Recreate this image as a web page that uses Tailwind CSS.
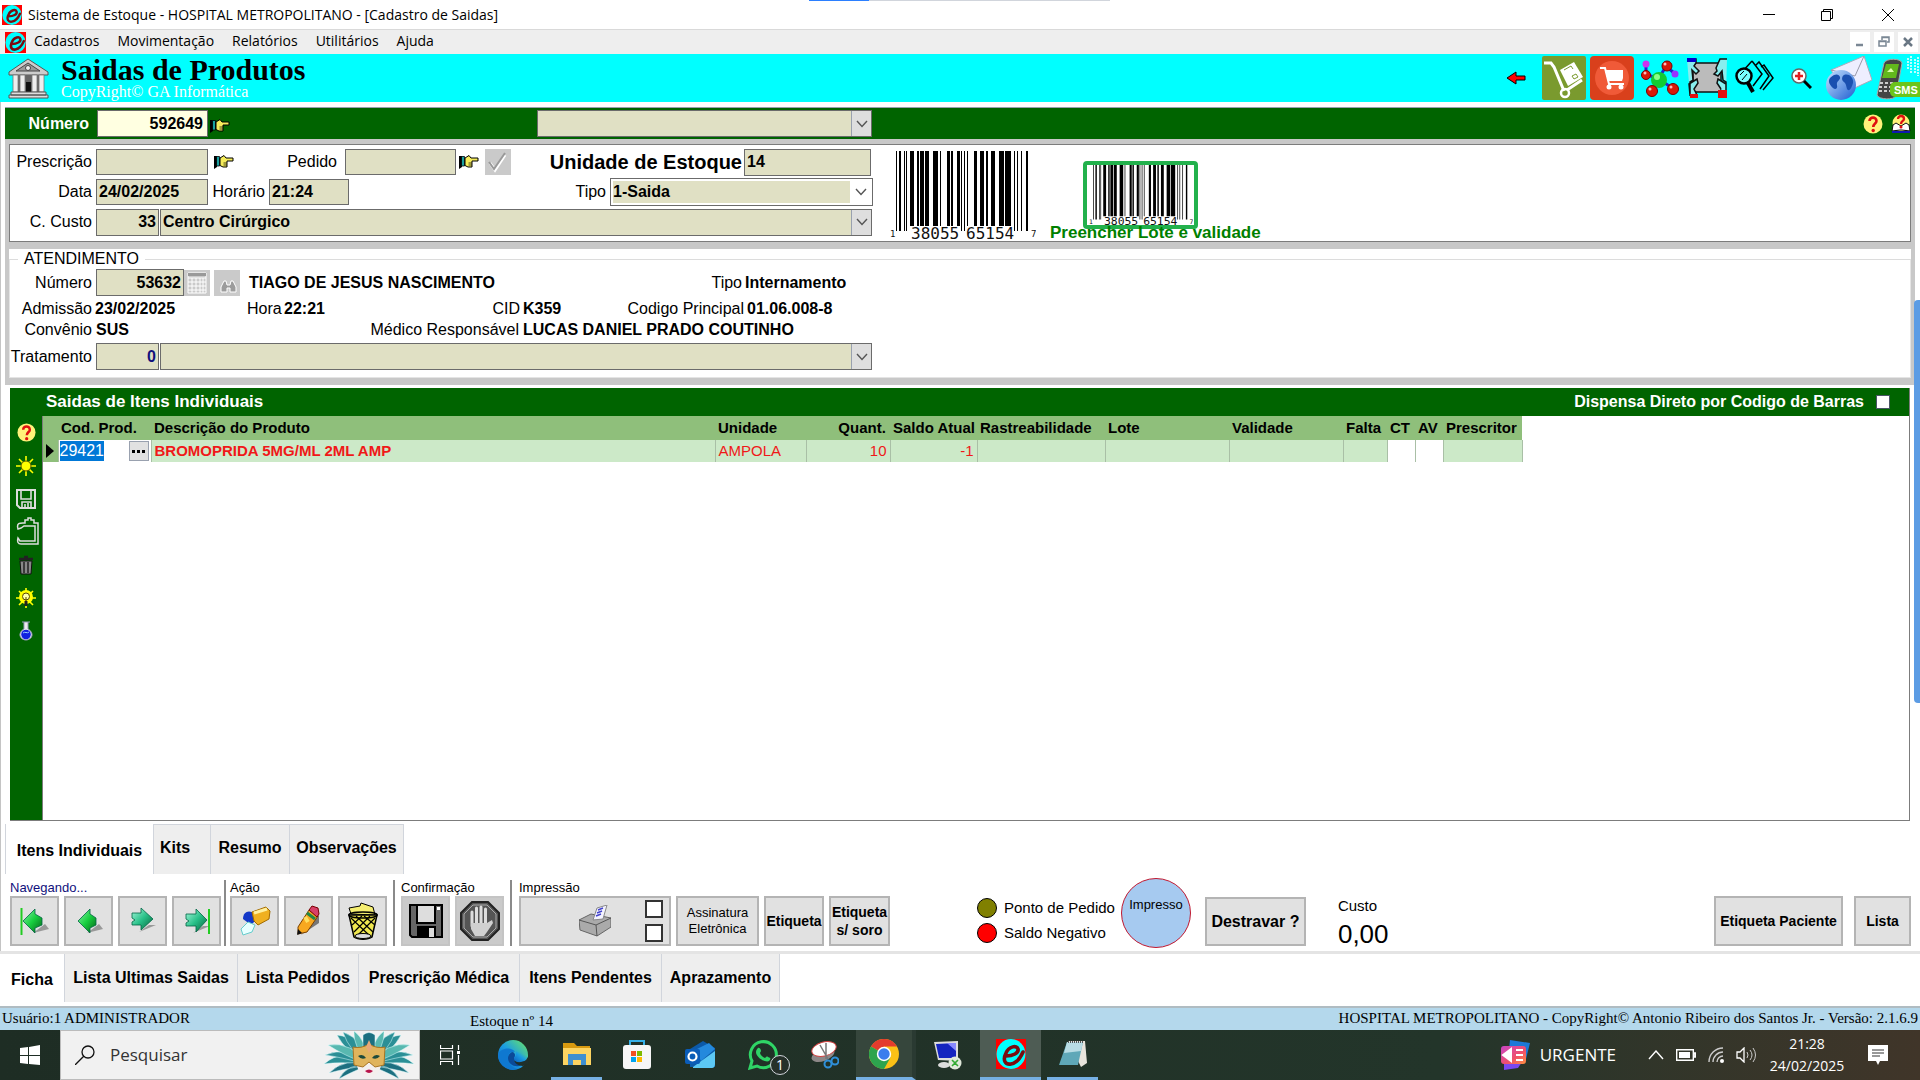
<!DOCTYPE html>
<html lang="pt-BR">
<head>
<meta charset="utf-8">
<title>Sistema de Estoque</title>
<script src="https://cdn.jsdelivr.net/npm/@tailwindcss/browser@4"></script>
</head>
<body class="flex min-h-screen flex-col bg-white font-['Liberation_Sans',Arial,sans-serif] text-base leading-5 text-black">

<!-- shared symbols -->
<svg class="absolute size-0" aria-hidden="true">
  <linearGradient id="gEdge" x1="0" y1="1" x2="1" y2="0"><stop offset="0" stop-color="#0b5fc0"/><stop offset=".5" stop-color="#1b9de2"/><stop offset="1" stop-color="#6fe860"/></linearGradient>
  <linearGradient id="gGreen" x1="0" y1="0" x2="1" y2="1"><stop offset="0" stop-color="#8ff0b0"/><stop offset=".5" stop-color="#18d040"/><stop offset="1" stop-color="#066018"/></linearGradient>
  <linearGradient id="gTeal" x1="0" y1="0" x2="1" y2="1"><stop offset="0" stop-color="#a8f8dc"/><stop offset=".5" stop-color="#28c088"/><stop offset="1" stop-color="#046038"/></linearGradient>
  <linearGradient id="gGlobe" x1="0" y1="0" x2="1" y2="1"><stop offset="0" stop-color="#c8e4ff"/><stop offset="1" stop-color="#1c5cd0"/></linearGradient>
  <linearGradient id="gNews" x1="0" y1="0" x2="1" y2="1"><stop offset="0" stop-color="#c846c8"/><stop offset=".6" stop-color="#f0506a"/><stop offset="1" stop-color="#ff9040"/></linearGradient>
  <symbol id="logo" viewBox="0 0 30 30"><path fill="#f00" d="M0 0h30v30H0z"/><ellipse cx="15" cy="15" rx="14.5" ry="15" fill="#0ff"/><path d="M10 17c7 0 13-3 12-7-1-4-9-3-12 4-4 8 0 12 5 11 5-1 9-5 12-12" fill="none" stroke="#7a0c10" stroke-width="3.6" stroke-linecap="round"/></symbol>
  <symbol id="hand" viewBox="0 0 20 14"><path fill="#000" d="M0 1h3v11l-3 2z"/><path fill="#1aa0a0" stroke="#000" stroke-width=".8" d="M2.500 1.500h3v9.500h-3z"/><path d="M6 3l4-2.500 2 2.500h7v3h-6v6h-4l-3-1.500z" fill="#f5ec5a" stroke="#000"/><path d="M9.500 8h3.500M9.500 10h3.500" stroke="#000" stroke-width=".7"/></symbol>
  <symbol id="help" viewBox="0 0 20 20"><circle cx="10" cy="10" r="9.500" fill="#fff27a"/><path d="M6.500 7c0-4.500 7-4.500 7 0 0 2.500-3.200 2.600-3.200 6" fill="none" stroke="#e01010" stroke-width="2.600"/><circle cx="10.200" cy="16.500" r="1.700" fill="#e01010"/></symbol>
  <symbol id="chev" viewBox="0 0 12 8"><path d="M1 1l5 5.500L11 1" fill="none" stroke="#555" stroke-width="1.400"/></symbol>
  <symbol id="barcode" viewBox="0 0 146 88" preserveAspectRatio="none"><path d="M6 0h1v80h-1zM9 0h2v80h-2zM14 0h1v80h-1zM16 0h1v80h-1zM20 0h4v75h-4zM27 0h2v75h-2zM30 0h4v75h-4zM35 0h4v75h-4zM43 0h5v75h-5zM50 0h1v75h-1zM57 0h3v75h-3zM61 0h2v75h-2zM67 0h3v75h-3zM71 0h1v80h-1zM74 0h1v80h-1zM77 0h1v75h-1zM84 0h3v75h-3zM90 0h4v75h-4zM96 0h2v75h-2zM101 0h4v75h-4zM109 0h5v75h-5zM115 0h3v75h-3zM118 0h3v75h-3zM124 0h1v80h-1zM127 0h1v80h-1zM131 0h1v80h-1zM136 0h2v80h-2z"/><g font-family="DejaVu Sans Mono, monospace" font-size="16" fill="#111"><text x="21" y="88">38055</text><text x="76" y="88">65154</text><g font-size="9"><text x="0" y="86">1</text><text x="141" y="86">7</text></g></g></symbol>
</svg>

<!-- window title -->
<header class="relative flex h-[29px] items-center bg-white pl-0.5 font-['Open_Sans','Noto_Sans',sans-serif] text-sm">
  <div class="absolute top-0 left-[809px] flex h-px w-[301px] bg-gray-300"><span class="w-[60px] bg-blue-500"></span></div>
  <svg class="mr-1.5 size-5"><use href="#logo"/></svg>
  <h1>Sistema de Estoque - HOSPITAL METROPOLITANO - [Cadastro de Saidas]</h1>
  <div class="ml-auto flex">
    <button aria-label="Minimizar" class="flex h-7 w-[58px] items-center justify-center"><svg class="h-3 w-3" viewBox="0 0 12 12"><path d="M0 5.500h12" stroke="#000"/></svg></button>
    <button aria-label="Restaurar" class="flex h-7 w-[58px] items-center justify-center"><svg class="h-3 w-3" viewBox="0 0 12 12"><path d="M.5 2.500h9v9h-9zM2.500 2.500v-2h9v9h-2" fill="none" stroke="#000"/></svg></button>
    <button aria-label="Fechar" class="flex h-7 w-16 items-center justify-center"><svg class="h-3 w-3" viewBox="0 0 12 12"><path d="M0 0l12 12M12 0L0 12" stroke="#000"/></svg></button>
  </div>
</header>

<nav class="flex h-[25px] items-center border-t border-[#d9d9d9] bg-[#eeeeee] pl-[5px] font-['Open_Sans','Noto_Sans',sans-serif] text-sm">
  <svg class="mr-2 size-[21px]"><use href="#logo"/></svg>
  <div class="flex gap-[18px] pb-0.5"><a href="#">Cadastros</a><a href="#">Movimentação</a><a href="#">Relatórios</a><a href="#">Utilitários</a><a href="#">Ajuda</a></div>
  <div class="ml-auto flex gap-1 pr-0.5">
    <button aria-label="Minimizar janela" class="flex h-5 w-5 items-center justify-center bg-white"><svg class="size-3" viewBox="0 0 12 12"><path d="M2 9h7" stroke="#7a8794" stroke-width="2.500"/></svg></button>
    <button aria-label="Restaurar janela" class="flex h-5 w-5 items-center justify-center bg-white"><svg class="size-3" viewBox="0 0 12 12"><path d="M1 5h7v5H1zM4 4V1h7v5H9M1 5.500h7M4 1.500h7" fill="none" stroke="#7a8794" stroke-width="1.500"/></svg></button>
    <button aria-label="Fechar janela" class="flex h-5 w-5 items-center justify-center bg-white"><svg class="size-3" viewBox="0 0 12 12"><path d="M2 2l8 8M10 2l-8 8" stroke="#6a7784" stroke-width="2.500"/></svg></button>
  </div>
</nav>

<!-- cyan banner -->
<section class="flex h-12 items-center bg-[#00ffff] pl-2">
  <svg class="size-[42px]" viewBox="0 0 42 42"><path d="M1 15L20 2l20 13v3H1z" fill="#ccc" stroke="#555"/><path d="M8 14l12-8 12 8z" fill="#999" stroke="#444"/><circle cx="20" cy="11" r="2.500" fill="#eee" stroke="#444"/><path d="M5 18h31v17H5z" fill="#666"/><path d="M5 18h5v17H5zM12 18h5v17h-5zM24 18h5v17h-5zM31 18h5v17h-5z" fill="#eee" stroke="#777" stroke-width=".8"/><path d="M18 25h5v10h-5z" fill="#111"/><path d="M3 35h35v3H3zM1 38h39v3H1z" fill="#ddd" stroke="#555"/></svg>
  <div class="ml-[11px] font-['Liberation_Serif',serif]">
    <h2 class="text-[30px] leading-7 font-bold">Saidas de Produtos</h2>
    <p class="text-base leading-4 text-white">CopyRight© GA Informática</p>
  </div>
  <div class="ml-auto flex gap-1">
    <button aria-label="Voltar" class="flex h-11 w-11 items-center justify-center"><svg class="h-4 w-5" viewBox="0 0 20 16"><path d="M1 8l9-6v4h9v4h-9v4z" fill="#f00" stroke="#000"/></svg></button>
    <button aria-label="Entregas" class="h-11 w-11"><svg viewBox="0 0 44 44"><rect width="44" height="44" rx="2" fill="#7a9a2e"/><path d="M2 7h7l3 4 10 24M25 34l15-10" fill="none" stroke="#fff" stroke-width="3"/><circle cx="23" cy="37" r="4" fill="none" stroke="#fff" stroke-width="2.500"/><path d="M18 14l14-8 9 15-15 9z" fill="#fff"/><path d="M22 14l7-4 2 3M32 23l4-2-2-3-4 2z" stroke="#7a9a2e" fill="none"/></svg></button>
    <button aria-label="Compras" class="h-11 w-11"><svg viewBox="0 0 44 44"><rect width="44" height="44" rx="4" fill="#d9401c"/><circle cx="22" cy="22" r="17" fill="#f05a38"/><path d="M10 12h5l4 16h15" fill="none" stroke="#fff" stroke-width="2"/><path d="M15 14h18v8l-1 3H18z" fill="#fff"/><circle cx="19" cy="31" r="2.500" fill="#fff"/><circle cx="31" cy="31" r="2.500" fill="#fff"/></svg></button>
    <button aria-label="Composição" class="h-11 w-11"><svg viewBox="0 0 44 44"><path d="M8 9l0 9 14 6M36 17l-8-7-8 14M14 35l8-11 14 9" stroke="#22c" stroke-width="3" fill="none"/><circle cx="21" cy="24" r="8" fill="#1c3"/><circle cx="19" cy="21" r="3" fill="#8f8"/><g fill="#d81808" stroke="#700"><circle cx="8" cy="19" r="4.500"/><circle cx="29" cy="10" r="5"/><circle cx="14" cy="35" r="5.500"/><circle cx="35" cy="33" r="5.500"/></g><circle cx="8" cy="8" r="3.500" fill="#c3e"/><circle cx="37" cy="18" r="3.500" fill="#93f"/><g fill="#fbb"><circle cx="27" cy="8" r="1.500"/><circle cx="12" cy="33" r="1.500"/><circle cx="33" cy="31" r="1.500"/><circle cx="7" cy="17" r="1.500"/></g></svg></button>
    <button aria-label="Equipe" class="h-11 w-11"><svg viewBox="0 0 44 44"><path d="M7 7h28v29H7z" fill="#bbb" stroke="#111" stroke-width="1.500"/><path d="M1 3h9v4l-2 3 5 5-3 3-4-4 1 10-3 2v14M41 3h-7l-4 9 1 3-3 3 4 2 4-5 1 9 3 2v12M4 39l-1-11 8-5 1 4-4 6 3 6M40 39V28l-8-5-1 4 4 6" fill="#8ee" stroke="#111" stroke-width="1.500"/><path fill="#00c" d="M1 2h9v4H1z"/><path fill="#e01010" d="M4 38h8v4H4zM32 34h9v8h-9z"/></svg></button>
    <button aria-label="Consultar documentos" class="h-11 w-11"><svg viewBox="0 0 44 44"><path d="M18 5l10 13-9 12M22 9l3-3 10 14-9 13M27 11l3-2 9 13-10 12M18 5L8 16" fill="none" stroke="#000" stroke-width="1.500"/><circle cx="10" cy="20" r="7.500" fill="#7ff" stroke="#000" stroke-width="2.500"/><path d="M6 19l4-4M8 24l5-6" stroke="#000"/><path d="M14 27l5 9" stroke="#000" stroke-width="4"/></svg></button>
    <button aria-label="Ampliar" class="flex h-11 w-[38px] items-center justify-center"><svg class="size-[21px]" viewBox="0 0 21 21"><circle cx="8" cy="8" r="7" fill="#fff" stroke="#666" stroke-width="1.500"/><path d="M8 4v8M4 8h8" stroke="#e02020" stroke-width="2.500"/><path d="M13 13l7 7" stroke="#000" stroke-width="3"/></svg></button>
    <button aria-label="E-mail" class="h-11 w-12"><svg viewBox="0 0 48 44"><path d="M7 14L40 0l8 24-26 12z" fill="#eef" stroke="#aab"/><path d="M7 14l24 6L40 0" fill="none" stroke="#99a"/><circle cx="17" cy="29" r="15" fill="url(#gGlobe)"/><path d="M6 22c5-5 9-4 10-1s-4 4-3 8-2 5-4 3-6-6-3-10zM20 19c6-2 10 4 9 8s-3 8-5 7-1-6-4-8-2-6 0-7z" fill="#1a50b0"/></svg></button>
    <button aria-label="SMS" class="h-11 w-11"><svg viewBox="0 0 44 44"><path d="M32 2v12M35 0v18M39 3v14M42 1v19" stroke="#bff" stroke-width="2" stroke-dasharray="2 1"/><path d="M8 7c2-5 17-5 18 0l-6 33c-2 4-17 4-19-1z" fill="#444" stroke="#aaa"/><path d="M10 8h13l-3 14H6z" fill="#62b81c"/><path d="M11 16l4-4 3 4z" fill="#dfa"/><path d="M4 27h14M3 31h14M3 35h13" stroke="#ccc" stroke-width="2" stroke-dasharray="3 2"/><rect x="14" y="26" width="34" height="15" rx="5" fill="#6cc41c"/><text x="18" y="38" font-family="Liberation Sans" font-weight="bold" font-size="11" fill="#fff">SMS</text></svg></button>
  </div>
</section>

<main class="flex flex-1 flex-col border-l border-[#c4c4c4] pt-[5px] pr-[5px] pl-1">
  <!-- number bar -->
  <div class="flex h-8 items-center border-t border-gray-400 bg-[#006400]">
    <label for="numero" class="w-[84px] text-right font-bold text-white">Número</label>
    <input id="numero" value="592649" class="ml-2 h-[27px] w-[111px] border border-[#6b6b6b] bg-[#ffffe1] px-1 text-right font-bold">
    <button aria-label="Ir para número" class="ml-0.5 pt-1"><svg class="h-3.5 w-5"><use href="#hand"/></svg></button>
    <div class="relative ml-[307px]">
      <select aria-label="Registro" class="block h-[27px] w-[335px] appearance-none border border-[#6b6b6b] bg-[#e0e0c4]"><option></option></select>
      <span class="pointer-events-none absolute inset-y-px right-px flex w-5 items-center justify-center border-l border-gray-400 bg-[#dedede]"><svg class="h-2 w-3"><use href="#chev"/></svg></span>
    </div>
    <div class="ml-auto flex gap-2 pr-1">
      <button aria-label="Ajuda"><svg class="size-5"><use href="#help"/></svg></button>
      <button aria-label="Manual"><svg class="size-5" viewBox="0 0 20 20"><circle cx="10" cy="9" r="8.500" fill="#fff27a"/><path d="M2 11l3-2 5 3 5-3 3 2 1 6-8-1h-2l-8 1z" fill="#fff" stroke="#111"/><path d="M1 18h18" stroke="#1018b0" stroke-width="2"/><path d="M7 5c0-4 6-4 6 0 0 2-3 2-3 5" fill="none" stroke="#e01010" stroke-width="2.300"/><circle cx="10" cy="13" r="1.500" fill="#e01010"/></svg></button>
    </div>
  </div>

  <div class="bg-[#c8c8c8] px-1 pt-[5px] pb-[7px]">
    <!-- exit header -->
    <section class="flex h-[98px] border border-[#7c7c7c] bg-white pt-1">
      <div class="flex w-[864px] flex-col gap-1">
        <div class="flex h-[26px] items-center">
          <label for="presc" class="w-[82px] text-right">Prescrição</label>
          <input id="presc" class="ml-1 h-[26px] w-28 border border-[#6b6b6b] bg-[#e0e0c4]">
          <button aria-label="Ir para prescrição" class="ml-1.5"><svg class="h-3.5 w-5"><use href="#hand"/></svg></button>
          <label for="pedido" class="w-[103px] text-right">Pedido</label>
          <input id="pedido" class="ml-2 h-[26px] w-[111px] border border-[#6b6b6b] bg-[#e0e0c4]">
          <button aria-label="Ir para pedido" class="ml-[3px]"><svg class="h-3.5 w-5"><use href="#hand"/></svg></button>
          <button aria-label="Confirmar pedido" class="ml-1.5 size-[26px] bg-[#cacaca]"><svg viewBox="0 0 26 26"><path d="M5 14l5 7L20 6" fill="none" stroke="#fff" stroke-width="3"/><path d="M4 13l5 7L20 4" fill="none" stroke="#999" stroke-width="2"/></svg></button>
          <label for="unid" class="w-[231px] text-right text-xl font-bold">Unidade de Estoque</label>
          <input id="unid" value="14" class="ml-0.5 h-[27px] w-[127px] border border-[#6b6b6b] bg-[#e0e0c4] px-0.5 font-bold">
        </div>
        <div class="flex h-[26px] items-center">
          <label for="data" class="w-[82px] text-right">Data</label>
          <input id="data" value="24/02/2025" class="ml-1 h-[26px] w-28 border border-[#6b6b6b] bg-[#e0e0c4] px-0.5 font-bold">
          <label for="hora" class="w-[57px] text-right">Horário</label>
          <input id="hora" value="21:24" class="ml-1 h-[26px] w-20 border border-[#6b6b6b] bg-[#e0e0c4] px-0.5 font-bold">
          <label for="tipo" class="w-[257px] text-right">Tipo</label>
          <div class="relative ml-1">
            <select id="tipo" class="block h-7 w-[263px] appearance-none border border-[#6b6b6b] bg-[#e0e0c4] px-0.5 font-bold ring-2 ring-white ring-inset"><option>1-Saida</option></select>
            <span class="pointer-events-none absolute inset-y-px right-px flex w-[22px] items-center justify-center bg-white"><svg class="h-2 w-3"><use href="#chev"/></svg></span>
          </div>
        </div>
        <div class="flex h-[26px] items-center">
          <label for="cc" class="w-[82px] text-right">C. Custo</label>
          <input id="cc" value="33" class="ml-1 h-[27px] w-[63px] border border-[#6b6b6b] bg-[#e0e0c4] px-0.5 text-right font-bold">
          <div class="relative ml-px">
            <select aria-label="Centro de custo" class="block h-[27px] w-[712px] appearance-none border border-[#6b6b6b] bg-[#e0e0c4] px-0.5 font-bold"><option>Centro Cirúrgico</option></select>
            <span class="pointer-events-none absolute inset-y-px right-px flex w-5 items-center justify-center border-l border-gray-400 bg-[#dedede]"><svg class="h-2 w-3"><use href="#chev"/></svg></span>
          </div>
        </div>
      </div>
      <svg class="mt-0.5 ml-4 h-[88px] w-[146px]"><use href="#barcode"/></svg>
      <div class="ml-[14px] flex flex-col items-start pt-3">
        <button aria-label="Ler código de barras" class="ml-[33px] h-[68px] w-[115px] rounded-sm border-4 border-[#22b14c] bg-white"><svg class="mx-auto h-[60px] w-[104px]"><use href="#barcode"/></svg></button>
        <p class="-mt-1 text-[17px] leading-4 font-bold text-[#008000]">Preencher Lote e validade</p>
      </div>
    </section>

    <!-- attendance -->
    <div class="mt-[7px] bg-white">
    <fieldset class="h-[129px] border border-t-[#dcdcdc] border-[#e4e4e4]">
      <legend class="ml-2 px-1.5 font-medium">ATENDIMENTO</legend>
      <div class="flex h-[27px] items-center">
        <label for="atend" class="w-[82px] text-right">Número</label>
        <input id="atend" value="53632" class="ml-1 h-[27px] w-[88px] border border-[#6b6b6b] bg-[#e0e0c4] px-0.5 text-right font-bold">
        <button aria-label="Calendário" class="size-[26px] bg-[#cacaca]"><svg viewBox="0 0 26 26"><path d="M4 3h18v20H4zM4 8h18M4 12h18M4 16h18M4 20h18M8 8v15M12 8v15M16 8v15M19 8v15" fill="none" stroke="#fff"/><path d="M4 3h18v3H4z" fill="#999"/></svg></button>
        <button aria-label="Procurar atendimento" class="ml-1 size-[26px] bg-[#cacaca]"><svg viewBox="0 0 26 26"><path d="M7 22v-5l3-6h2l1 4h3l1-4h2l3 6v5h-6v-4h-3v4z" fill="#9c9c9c" stroke="#fff"/></svg></button>
        <b class="w-[466px] pl-[9px]">TIAGO DE JESUS NASCIMENTO</b>
        <span class="w-9 text-right">Tipo</span><b class="ml-[3px]">Internamento</b>
      </div>
      <div class="flex h-[25px] items-center">
        <span class="w-[82px] text-right">Admissão</span><b class="ml-[3px] w-[152px]">23/02/2025</b>
        <span class="w-[34px]">Hora</span><b class="ml-[3px] w-[190px]">22:21</b>
        <span class="w-[46px] text-right">CID</span><b class="ml-[3px] w-[100px]">K359</b>
        <span class="w-[121px] text-right">Codigo Principal</span><b class="ml-[3px]">01.06.008-8</b>
      </div>
      <div class="flex h-[18px] items-center">
        <span class="w-[82px] text-right">Convênio</span><b class="ml-1 w-[260px]">SUS</b>
        <span class="w-[163px] text-right">Médico Responsável</span><b class="ml-1">LUCAS DANIEL PRADO COUTINHO</b>
      </div>
      <div class="mt-1 flex h-[27px] items-center">
        <label for="trat" class="w-[82px] text-right">Tratamento</label>
        <input id="trat" value="0" class="ml-1 h-[27px] w-[63px] border border-[#6b6b6b] bg-[#e0e0c4] px-0.5 text-right font-bold text-[#10107c]">
        <div class="relative ml-px">
          <select aria-label="Tratamento" class="block h-[27px] w-[712px] appearance-none border border-[#6b6b6b] bg-[#e0e0c4]"><option></option></select>
          <span class="pointer-events-none absolute inset-y-px right-px flex w-5 items-center justify-center border-l border-gray-400 bg-[#dedede]"><svg class="h-2 w-3"><use href="#chev"/></svg></span>
        </div>
      </div>
    </fieldset>
    </div>
  </div>

  <!-- items -->
  <section class="mx-[5px] mt-[3px] flex flex-1 flex-col border-r border-b border-[#7c7c7c]">
    <div class="flex h-7 items-center justify-between bg-[#006400] pr-[19px] pl-9 font-bold text-white">
      <h3 class="text-[17px]">Saidas de Itens Individuais</h3>
      <label class="flex items-center gap-3">Dispensa Direto por Codigo de Barras <input type="checkbox" class="size-3.5 appearance-none border border-gray-600 bg-white"></label>
    </div>
    <div class="flex flex-1">
      <div class="flex w-[33px] flex-col border-r border-[#7c7c7c] bg-[#006400]">
        <button aria-label="Ajuda dos itens" class="flex h-[33px] items-center justify-center"><svg class="size-[19px]"><use href="#help"/></svg></button>
        <button aria-label="Novo item" class="flex h-[33px] items-center justify-center"><svg class="size-5" viewBox="0 0 20 20"><path d="M10 0v20M0 10h20M3 3l14 14M17 3L3 17" stroke="#ff0" stroke-width="1.600"/><circle cx="10" cy="10" r="5" fill="#ff0" stroke="#550"/></svg></button>
        <button aria-label="Gravar item" class="flex h-[33px] items-center justify-center"><svg class="size-5" viewBox="0 0 20 20"><path d="M1 1h18v18H4l-3-3z" fill="none" stroke="#ddd" stroke-width="2"/><path d="M5 1v9h10V1M6 19v-6h9v6M9 15v4M12 14v4" fill="none" stroke="#ddd" stroke-width="1.600"/></svg></button>
        <button aria-label="Colar item" class="flex h-[33px] items-center justify-center pl-1"><svg class="h-[29px] w-6" viewBox="0 0 24 29"><path d="M2 12c-2-7 3-6 7-6V3h3V1h3v2h3v3h4v21H5c-3 0-4-2-3-6l2 3h15V9H8l-3 2z" fill="none" stroke="#ddd" stroke-width="1.500"/></svg></button>
        <button aria-label="Excluir item" class="flex h-[33px] items-center justify-center"><svg class="size-5" viewBox="0 0 20 20"><path d="M4 6h12l-1 13H5z" fill="#888" stroke="#111"/><path d="M3 4h14M8 2h4" stroke="#222" stroke-width="2.500"/><path d="M8 7v11M12 7v11" stroke="#222" stroke-width="1.500"/></svg></button>
        <button aria-label="Sugestão" class="flex h-[33px] items-center justify-center"><svg class="size-5" viewBox="0 0 20 20"><path d="M10 0v20M0 10h20M3 3l14 14M17 3L3 17" stroke="#ff0" stroke-width="1.600"/><circle cx="10" cy="9" r="7" fill="#ff0"/><circle cx="10" cy="8.500" r="3.500" fill="#ffa" stroke="#540"/><path d="M10 9v4" stroke="#540"/><path d="M8.500 13h3v5h-3z" fill="#222"/></svg></button>
        <button aria-label="Componentes" class="flex h-[33px] items-center justify-center"><svg class="size-5" viewBox="0 0 20 20"><path d="M6 1h8M8 1v7c-7 4-4 11 2 11s9-7 2-11V1" fill="#eee" stroke="#99b"/><circle cx="10" cy="13.500" r="4.800" fill="#1020e0"/><path d="M7 12c2-2 4 1 6-1" stroke="#9cf" fill="none"/></svg></button>
      </div>
      <div class="flex-1 bg-white">
        <table class="w-[1479px] table-fixed border-collapse text-[15px]">
          <colgroup><col class="w-[15px]"><col class="w-[93px]"><col class="w-[564px]"><col class="w-[91px]"><col class="w-[84px]"><col class="w-[87px]"><col class="w-32"><col class="w-[124px]"><col class="w-[114px]"><col class="w-11"><col class="w-7"><col class="w-7"><col class="w-[79px]"></colgroup>
          <thead><tr class="h-6 bg-[#8fbf7b] text-left whitespace-nowrap [&>th]:p-0 [&>th]:pl-[3px]">
            <th></th><th>Cod. Prod.</th><th>Descrição do Produto</th><th>Unidade</th><th class="text-right">Quant.&nbsp;</th><th>Saldo Atual</th><th>Rastreabilidade</th><th>Lote</th><th>Validade</th><th>Falta</th><th>CT</th><th>AV</th><th>Prescritor</th>
          </tr></thead>
          <tbody><tr class="h-[22px] bg-[#cce9c8] text-[#f01818] [&>td]:border-r [&>td]:border-[#a9bfa6] [&>td]:p-0 [&>td]:px-[3px]">
            <td class="bg-[#8fbf7b]"><svg class="h-3.5 w-2" viewBox="0 0 8 14"><path d="M0 0l8 7-8 7z"/></svg></td>
            <td class="bg-white"><div class="flex items-center justify-between"><span class="-ml-0.5 bg-[#0078d7] text-base leading-5 text-white">29421</span><button aria-label="Procurar produto" class="-mr-px flex h-5 w-5 items-center justify-center gap-0.5 border border-gray-400 bg-[#e1e1e1]"><i class="size-[3px] bg-black"></i><i class="size-[3px] bg-black"></i><i class="size-[3px] bg-black"></i></button></div></td>
            <td class="font-bold">BROMOPRIDA 5MG/ML 2ML AMP</td><td>AMPOLA</td><td class="text-right">10</td><td class="text-right">-1</td><td></td><td></td><td></td><td></td><td class="bg-white"></td><td class="bg-white"></td><td></td>
          </tr></tbody>
        </table>
      </div>
    </div>
  </section>

  <div class="mt-[3px] flex h-[50px] font-bold">
    <button class="w-[148px] border-l border-gray-300 pt-1 text-center">Itens Individuais</button>
    <button class="w-[57px] border-t border-l border-gray-300 bg-[#eeeeee] pb-1 pl-1.5 text-left">Kits</button>
    <button class="w-[79px] border-t border-l border-gray-300 bg-[#eeeeee] pb-1">Resumo</button>
    <button class="w-[115px] border-x border-t border-gray-300 bg-[#eeeeee] pb-1">Observações</button>
  </div>

  <!-- action bar -->
  <div class="mt-1.5 flex h-[71px] items-start text-[13px] leading-4">
    <div class="pl-[5px]"><p class="text-[#10107c]">Navegando...</p>
      <div class="flex gap-[5px]">
        <button aria-label="Primeiro" class="flex h-[50px] w-[49px] items-center justify-center border-2 border-[#b4b4b4] bg-[#e1e1e1]"><svg class="size-8" viewBox="0 0 32 32"><path d="M14 28l16-4-4-5z" fill="#999"/><path d="M4 16L16 4v5l7 4v7l-7 3v5z" fill="url(#gGreen)" stroke="#064" stroke-width=".8"/><path d="M2.500 3v27" stroke="#2c2" stroke-width="2"/></svg></button>
        <button aria-label="Anterior" class="flex h-[50px] w-[49px] items-center justify-center border-2 border-[#b4b4b4] bg-[#e1e1e1]"><svg class="size-8" viewBox="0 0 32 32"><path d="M14 28l16-4-4-5z" fill="#999"/><path d="M5 16L17 4v5l6 4v7l-6 3v5z" fill="url(#gGreen)" stroke="#064" stroke-width=".8"/></svg></button>
        <button aria-label="Próximo" class="flex h-[50px] w-[49px] items-center justify-center border-2 border-[#b4b4b4] bg-[#e1e1e1]"><svg class="size-8" viewBox="0 0 32 32"><path d="M12 27l17-7h-7z" fill="#999"/><path d="M26 14L14 3v5H5v5l3 2-3 2v3h9v5z" fill="url(#gTeal)" stroke="#064" stroke-width=".8"/></svg></button>
        <button aria-label="Último" class="flex h-[50px] w-[49px] items-center justify-center border-2 border-[#b4b4b4] bg-[#e1e1e1]"><svg class="size-8" viewBox="0 0 32 32"><path d="M12 28l17-7h-7z" fill="#999"/><path d="M26 15L15 4v5H5v5l3 2-3 2v3h10v6z" fill="url(#gTeal)" stroke="#064" stroke-width=".8"/><path d="M28 4v25" stroke="#2c2" stroke-width="2"/></svg></button>
      </div>
    </div>
    <div class="ml-[3px] border-l-2 border-[#8a8a8a] pl-1"><p>Ação</p>
      <div class="flex gap-[5px]">
        <button aria-label="Incluir" class="flex h-[50px] w-[49px] items-center justify-center border-2 border-[#b4b4b4] bg-[#e1e1e1]"><svg class="size-8" viewBox="0 0 32 32"><path d="M4 14c0-6 4-9 9-7l3 9-4 4z" fill="#1438c8"/><path d="M13 7l14-5 4 4-1 8-11 6-4-4z" fill="#f0b020" stroke="#a06a00"/><path d="M15 8l13-4" stroke="#fff0a0" stroke-width="3"/><path d="M2 24l7-7 7 3-3 7-9 3z" fill="#e8ffff" stroke="#6cc"/></svg></button>
        <button aria-label="Alterar" class="flex h-[50px] w-[49px] items-center justify-center border-2 border-[#b4b4b4] bg-[#e1e1e1]"><svg class="size-8" viewBox="0 0 32 32"><path d="M8 30l18-12V10z" fill="#777"/><path d="M5 22L16 5l9 6-11 16-9 2z" fill="#f8a820" stroke="#7a4000"/><path d="M12 12l3 5" stroke="#ffe060" stroke-width="4"/><path d="M16 5l3-4 6 2 1 6-2 3z" fill="#d84068" stroke="#700"/><path d="M14 8l8 6" stroke="#284" stroke-width="3"/><path d="M5 24l4 4-5 2z" fill="#111"/></svg></button>
        <button aria-label="Excluir" class="flex h-[50px] w-[49px] items-center justify-center border-2 border-[#b4b4b4] bg-[#e1e1e1]"><svg class="h-[38px] w-8" viewBox="0 0 32 38"><path d="M4 12L2 6l11-2 1-3 12 4 2 8z" fill="#f5ee70" stroke="#000"/><path d="M2 13h28l-5 22c-4 3-14 3-18 0z" fill="#f0e850" stroke="#000" stroke-width="1.500"/><path d="M4 16l20 19M9 14l17 16M17 14l11 9M28 16L9 35M23 14L7 30M15 14L5 23" stroke="#000" stroke-width="1.200"/><ellipse cx="16" cy="13" rx="14" ry="3" fill="none" stroke="#000" stroke-width="1.500"/><ellipse cx="16" cy="34" rx="8" ry="2.500" fill="#ddd" stroke="#000"/></svg></button>
      </div>
    </div>
    <div class="ml-1.5 border-l-2 border-[#8a8a8a] pl-1.5"><p>Confirmação</p>
      <div class="flex gap-[5px]">
        <button aria-label="Gravar" class="flex h-[50px] w-[49px] items-center justify-center border-2 border-[#c4c4c4] bg-[#cacaca]"><svg class="size-[34px]" viewBox="0 0 34 34"><path d="M1 1h32v32H3l-2-2z" fill="#666" stroke="#000" stroke-width="2"/><path d="M8 1h18v18H8z" fill="#ddd" stroke="#000" stroke-width="2"/><path d="M8 22h19v11H8z" fill="#000"/><path d="M20 24h5v9h-5z" fill="#ddd"/><path d="M28 3h3v3h-3z" fill="#fff"/></svg></button>
        <button aria-label="Cancelar" class="flex h-[50px] w-[49px] items-center justify-center border-2 border-[#c4c4c4] bg-[#cacaca]"><svg class="size-10 shrink-0" viewBox="0 0 40 40"><path d="M12 1h16l11 11v16L28 39H12L1 28V12z" fill="#555" stroke="#222" stroke-width="2"/><path d="M13 4h14l9 9v14l-9 9H13l-9-9V13z" fill="none" stroke="#aaa"/><path d="M12 11v14M16.500 7v16M21 6v16M25.500 8v16" stroke="#ddd" stroke-width="3" stroke-linecap="round"/><path d="M11 22h16l5-3 1 3-6 9-3 4H15l-4-7z" fill="#d0d0d0"/></svg></button>
      </div>
    </div>
    <div class="ml-1.5 border-l-2 border-[#8a8a8a] pl-[7px]"><p>Impressão</p>
      <div class="flex gap-[5px]">
        <div class="relative">
          <button aria-label="Imprimir" class="flex h-[50px] w-[152px] items-center justify-center border-2 border-[#b4b4b4] bg-[#e1e1e1]"><svg class="size-8" viewBox="0 0 32 32"><path d="M0 15l12-6 20 4v9L18 31 1 25z" fill="#aaa" stroke="#666"/><path d="M0 15l17 5 15-7M17 20l1 11" stroke="#555" fill="none"/><path d="M14 15l4-12 10-3-4 14z" fill="#f4f4ff" stroke="#888"/><path d="M19 5l5-2M18 8l5-2M17 11l5-2" stroke="#44c" stroke-width="1.500"/></svg></button>
          <input type="checkbox" aria-label="Imprimir cópia 1" class="absolute top-1 right-2 size-[18px] appearance-none border-2 border-[#333] bg-white">
          <input type="checkbox" aria-label="Imprimir cópia 2" class="absolute right-2 bottom-1 size-[18px] appearance-none border-2 border-[#333] bg-white">
        </div>
        <button class="h-[50px] w-[83px] border-2 border-[#b4b4b4] bg-[#e1e1e1] text-center">Assinatura<br>Eletrônica</button>
        <button class="h-[50px] w-[60px] border-2 border-[#b4b4b4] bg-[#e1e1e1] text-sm font-bold">Etiqueta</button>
        <button class="h-[50px] w-[61px] border-2 border-[#b4b4b4] bg-[#e1e1e1] text-center text-sm leading-[18px] font-bold">Etiqueta<br>s/ soro</button>
      </div>
    </div>
    <ul class="mt-[18px] ml-[87px] flex flex-col gap-[5px] text-[15px] leading-5">
      <li class="flex items-center gap-[7px]"><i class="size-5 rounded-full border border-black bg-[#808000]"></i>Ponto de Pedido</li>
      <li class="flex items-center gap-[7px]"><i class="size-5 rounded-full border border-black bg-[#ff0000]"></i>Saldo Negativo</li>
    </ul>
    <div class="-mt-0.5 ml-1.5 h-[70px] w-[70px] rounded-full border border-[#c01830] bg-[#a6caf0] pt-[18px] text-center">Impresso</div>
    <button class="mt-[17px] ml-3.5 h-[49px] w-[101px] border-2 border-[#b4b4b4] bg-[#e1e1e1] text-base font-bold">Destravar ?</button>
    <div class="mt-4 ml-8 text-[15px] leading-5">Custo<div class="mt-1 text-[26px] leading-7">0,00</div></div>
    <div class="mt-4 ml-auto flex gap-[11px] text-sm font-bold">
      <button class="h-[50px] w-[129px] border-2 border-[#b4b4b4] bg-[#e1e1e1]">Etiqueta Paciente</button>
      <button class="mr-1 h-[50px] w-[57px] border-2 border-[#b4b4b4] bg-[#e1e1e1]">Lista</button>
    </div>
  </div>
</main>

<!-- page tabs -->
<div class="flex h-[55px] border-t-3 border-[#e4e4e4] pb-1 font-bold">
  <button class="w-16 pt-1">Ficha</button>
  <button class="w-[173px] border-l border-gray-300 bg-[#eeeeee]">Lista Ultimas Saidas</button>
  <button class="w-[121px] border-l border-gray-300 bg-[#eeeeee]">Lista Pedidos</button>
  <button class="w-[161px] border-l border-gray-300 bg-[#eeeeee]">Prescrição Médica</button>
  <button class="w-[142px] border-l border-gray-300 bg-[#eeeeee]">Itens Pendentes</button>
  <button class="w-[119px] border-x border-gray-300 bg-[#eeeeee]">Aprazamento</button>
</div>

<footer class="flex h-6 border-t-2 border-[#b0bcc2] bg-[#b4d8ec] px-0.5 font-['Liberation_Serif',serif] text-[15px] leading-5">
  <span class="w-[468px]">Usuário:1 ADMINISTRADOR</span><span class="pt-[3px]">Estoque nº 14</span>
  <span class="ml-auto">HOSPITAL METROPOLITANO - CopyRight© Antonio Ribeiro dos Santos Jr. - Versão: 2.1.6.9</span>
</footer>

<!-- taskbar -->
<div class="flex h-[50px] items-stretch bg-linear-to-r from-[#1e2d24] via-[#23352a] via-75% to-[#403529] font-['Open_Sans','Noto_Sans',sans-serif] text-white">
  <button aria-label="Iniciar" class="flex w-[60px] items-center justify-center"><svg class="size-5" viewBox="0 0 20 20"><path d="M0 3l8-1v8H0zM9 2l11-2v10H9zM0 11h8v8l-8-1zM9 11h11v9L9 19z" fill="#fff"/></svg></button>
  <label class="flex w-[360px] items-center border border-[#bbb] bg-[#f1f1f1] pl-3.5">
    <svg class="size-5" viewBox="0 0 20 20"><circle cx="13" cy="7" r="6" fill="none" stroke="#111" stroke-width="1.300"/><path d="M9 11l-9 9" stroke="#111" stroke-width="1.300"/></svg>
    <input aria-label="Pesquisar" placeholder="Pesquisar" class="ml-[15px] w-[213px] text-[17px] text-black placeholder-[#333]">
    <svg class="h-12 w-[92px]" viewBox="0 0 92 48"><g stroke="#dff" stroke-width=".5"><g fill="#2b8f96"><path d="M46 34Q22 20 14 4 36 6 46 34zM46 34Q70 20 78 4 56 6 46 34zM46 34Q20 30 1 33 20 16 46 34zM46 34Q72 30 91 33 72 16 46 34z"/><path d="M46 34Q26 20 20 1 40 8 46 34zM46 34Q66 20 72 1 52 8 46 34zM46 34Q18 26 2 24 24 14 46 34zM46 34Q74 26 90 24 68 14 46 34z"/></g><g fill="#58b8b0"><path d="M46 34Q30 16 31 0 44 10 46 34zM46 34Q62 16 61 0 48 10 46 34zM46 34Q20 24 5 14 28 10 46 34zM46 34Q72 24 87 14 64 10 46 34z"/></g><g fill="#1c6f80"><path d="M46 34Q20 38 6 42 22 26 46 34zM46 34Q72 38 86 42 70 26 46 34zM46 34Q26 42 16 48 24 32 46 34zM46 34Q66 42 76 48 68 32 46 34zM40 20V4q6-5 12 0v16z"/></g></g><path d="M33 28c0-10 26-10 26 0 0 10-6 19-13 19s-13-9-13-19z" fill="#f4f0ee"/><path d="M30 16q8 2 16-3 8 5 16 3l-1 18-9 2-6-5-6 5-9-2z" fill="#e0b45c" stroke="#a87422"/><path d="M35 25q5-3 8 2-5 2-8-2zM57 25q-5-3-8 2 5 2 8-2z" fill="#1d4a3c"/><path d="M46 9l3 7-3 6-3-6z" fill="#e8a878"/><path d="M42 40q4-3 8 0-4 4-8 0z" fill="#b8144a"/></svg>
  </label>
  <button aria-label="Visão de tarefas" class="flex w-[60px] items-center justify-center"><svg class="size-5" viewBox="0 0 20 20"><path d="M.5 0v3.500h12V0M.5 20v-3.500h12V20M.5 6h12v8H.5zM18.500 0v5M18.500 10v10" fill="none" stroke="#fff" stroke-width="1.200"/><path d="M17 6h3v3h-3z" fill="#fff"/></svg></button>
  <button aria-label="Edge" class="flex w-[66px] items-center justify-center"><svg class="size-[30px]" viewBox="0 0 30 30"><circle cx="15" cy="15" r="15" fill="url(#gEdge)"/><path d="M0 15C1 8 14 6 17 12c-5-1-7 3-7 6 0 5 4 10 10 11C9 32 0 24 0 15z" fill="#0f78d0"/><path d="M10 18c0 6 6 9 11 8 3-1 6-3 7-6-4 3-12 3-12-1 0-2 1-2 1-4 0-1-1-3-3-3-2 1-4 3-4 6z" fill="#0b4a98"/><path d="M18 14c0 3-2 3-2 5 0 4 8 4 12 1 2-2 2-4 2-5l-12-4z" fill="url(#gEdge)"/><path d="M16 19c0 4 8 4 12 1l2-3v7l-5 2c-5 0-9-3-9-7z" fill="#20302a"/></svg></button>
  <button aria-label="Explorador" class="mr-1 ml-[5px] flex w-[51px] items-center justify-center border-b-3 border-[#76b0e4]"><svg class="h-6 w-7" viewBox="0 0 28 24"><path d="M0 1h11l3 3h13v5H0z" fill="#d89a10"/><path d="M0 6h28v17H0z" fill="#fcd462"/><path d="M5 23V12h18v11h-5v-5h-8v5z" fill="#3f8fd0"/></svg></button>
  <button aria-label="Loja" class="flex w-[62px] items-center justify-center"><svg class="h-[30px] w-[30px]" viewBox="0 0 30 30"><path d="M8 6V1h14v5" fill="none" stroke="#36b0e8" stroke-width="2"/><rect y="5" x="1" width="28" height="24" rx="3" fill="#f6f6f6"/><path fill="#f25022" d="M9 11h5v5H9z"/><path fill="#7fba00" d="M15 11h5v5h-5z"/><path fill="#00a4ef" d="M9 17h5v5H9z"/><path fill="#ffb900" d="M15 17h5v5h-5z"/></svg></button>
  <button aria-label="Outlook" class="flex w-16 items-center justify-center"><svg class="size-[30px]" viewBox="0 0 30 30"><path d="M5 9l13-8 12 7v19H5z" fill="#0c59a8"/><path d="M10 10L24 3l6 6-14 12z" fill="#2489dd"/><path d="M8 27l22-16v13c0 2-1 4-3 4H8z" fill="#5cc8f4"/><rect y="9" width="15" height="15" rx="2" fill="#0a5cb8"/><circle cx="7.500" cy="16.500" r="4" fill="none" stroke="#fff" stroke-width="2.200"/></svg></button>
  <button aria-label="WhatsApp" class="relative flex w-[62px] items-center justify-center"><svg class="size-[30px]" viewBox="0 0 30 30"><path d="M2 28l2-7A13 13 0 1 1 9 26z" fill="none" stroke="#2fd566" stroke-width="3"/><path d="M10 8c2-1 3 2 3 3s-1 1-1 2c1 3 3 4 5 5 1-1 2-2 3-1 3 1 3 2 1 4-3 2-13-3-13-9 0-2 1-3 2-4z" fill="#2fd566"/></svg><span class="absolute top-[25px] right-[4px] flex size-5 items-center justify-center rounded-full border border-gray-300 bg-[#26302a] text-sm">1</span></button>
  <button aria-label="Ferramenta de captura" class="flex w-[62px] items-center justify-center"><svg class="size-7" viewBox="0 0 28 28"><ellipse cx="12" cy="14" rx="12" ry="6" fill="#8d8888" transform="rotate(-20 12 14)"/><ellipse cx="13" cy="8" rx="12.500" ry="7" fill="#fff" stroke="#d04040" transform="rotate(-15 13 8)"/><path d="M9 4l8 14M15 2v16" stroke="#777" stroke-width="1.500"/><circle cx="17" cy="23" r="3.500" fill="none" stroke="#2f8fd8" stroke-width="2"/><circle cx="24" cy="20" r="3.500" fill="none" stroke="#2f8fd8" stroke-width="2"/></svg></button>
  <button aria-label="Chrome" class="flex w-[60px] items-center justify-center border-r-4 border-b-3 border-r-[#2a3a32] border-b-[#76b0e4] bg-[#36463c]"><svg class="size-[30px]" viewBox="0 0 30 30"><circle cx="15" cy="15" r="15" fill="#fbc116"/><path d="M15 15L2 7.500A15 15 0 0 1 28 7.500H15z" fill="#e33b2e"/><path d="M2 7.500A15 15 0 0 0 15 30l6.500-11.500L15 15z" fill="#2da44e"/><circle cx="15" cy="15" r="7.200" fill="#fff"/><circle cx="15" cy="15" r="5.700" fill="#3b7ded"/></svg></button>
  <button aria-label="Área de trabalho remota" class="flex w-16 items-center justify-center"><svg class="size-[30px]" viewBox="0 0 30 30"><ellipse cx="11" cy="25" rx="6" ry="3" fill="#ddd"/><path d="M1 2l24-1v20L5 20z" fill="#ddd"/><path d="M3 4l20-1v15L6 18z" fill="#1424c0"/><path d="M14 3h9v8z" fill="#88f"/><circle cx="22" cy="23" r="6.500" fill="#dfe8da"/><path d="M19 20l3 3-3 3M25 20l-3 3 3 3" stroke="#3a3" stroke-width="1.600" fill="none"/></svg></button>
  <button aria-label="Sistema de Estoque" class="flex w-[61px] items-center justify-center border-b-3 border-[#76b0e4] bg-[#4e5c54]"><svg class="size-[30px]"><use href="#logo"/></svg></button>
  <button aria-label="Bloco de notas" class="ml-1.5 flex w-[51px] items-center justify-center border-b-3 border-[#76b0e4]"><svg class="size-7" viewBox="0 0 28 28"><path d="M9 1h17l2 22-6 4z" fill="#e8e4dc"/><path d="M8 2h16l-5 23H0z" fill="#5fa8b8"/><path d="M8 2h16l-2 9-17 2z" fill="#b8dce4"/><path d="M9 2h15" stroke="#555" stroke-width="2" stroke-dasharray="1 1"/></svg></button>

  <div class="ml-auto flex items-center">
    <button class="flex items-center gap-2.5 text-[17px]"><svg class="size-[30px]" viewBox="0 0 30 30"><path d="M10 0l20 3-4 16H8z" fill="#1c78d8"/><path d="M4 22h18l-4 6-14 2z" fill="#7a48f0"/><rect x="1" y="6" width="25" height="18" rx="3" fill="url(#gNews)"/><path d="M3 15l8-6v12zM16 10h7M16 15h7M16 20h7" stroke="#fff" stroke-width="2" fill="#fff"/></svg>URGENTE</button>
    <svg class="ml-8 h-2.5 w-4" viewBox="0 0 16 10"><path d="M1 9l7-8 7 8" fill="none" stroke="#fff" stroke-width="1.400"/></svg>
    <svg class="ml-3 h-3 w-5" viewBox="0 0 20 12"><path d="M.7.700h16.600v10.600H.7zM18 4h1.500v4H18z" fill="none" stroke="#fff" stroke-width="1.400"/><path d="M3 3h11v6H3z" fill="#fff"/></svg>
    <svg class="ml-3 size-4" viewBox="0 0 16 16"><path d="M1 15A14 14 0 0 1 15 1M5 15A10 10 0 0 1 15 5M9 15a6 6 0 0 1 6-6" fill="none" stroke="#ccc" stroke-width="1.400"/><circle cx="14" cy="14" r="2" fill="#fff"/></svg>
    <svg class="ml-3 h-4 w-5" viewBox="0 0 20 16"><path d="M1 5h3l4-4v14l-4-4H1z" fill="none" stroke="#fff" stroke-width="1.300"/><path d="M11 5q2 3 0 6M14 3q4 5 0 10M17 1q5 7 0 14" fill="none" stroke="#ccc"/></svg>
    <div class="ml-3 w-[78px] text-center text-sm leading-[22px]">21:28<br>24/02/2025</div>
    <button aria-label="Notificações" class="mx-[22px] mr-8"><svg class="size-5" viewBox="0 0 20 20"><path d="M0 0h20v16h-8l-2 4-2-4H0z" fill="#fff"/><path d="M4 5h12M4 8h12M4 11h8" stroke="#333"/></svg></button>
  </div>
</div>

<!-- side drawer handle -->
<div class="absolute top-[300px] right-0 h-[403px] w-1.5 rounded-l bg-[#5c9ce4]"></div>
</body>
</html>
